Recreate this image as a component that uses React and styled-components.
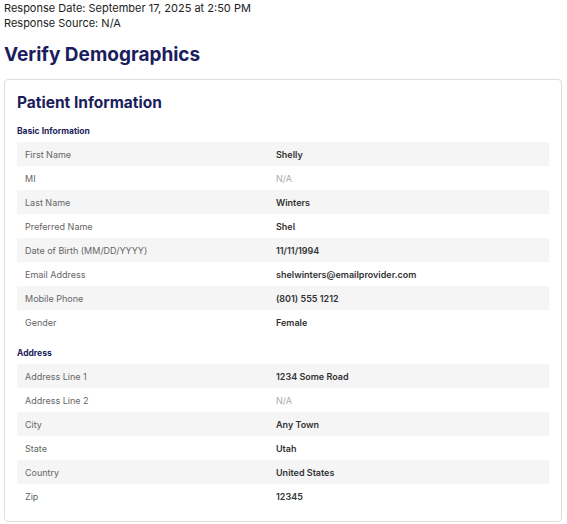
import React from 'react';
import styled, { createGlobalStyle } from 'styled-components';

const GlobalStyle = createGlobalStyle`
  body {
    margin: 0;
    font-family: Inter, "Noto Sans", sans-serif;
    background: #fff;
    color: #222;
  }
`;

const Page = styled.div`
  padding: 1px 5px 0 4px;
`;

const MetaLine = styled.div`
  font-size: 11px;
  line-height: 15px;
  color: #222;
`;

const Title = styled.h1`
  margin: 12px 0 12px;
  font-size: 19px;
  line-height: 24px;
  font-weight: 700;
  color: #1b1d5c;
`;

const Card = styled.div`
  border: 1px solid #ddd;
  border-radius: 4px;
  padding: 12px 12px 13px;
`;

const CardTitle = styled.h2`
  margin: 0 0 11px;
  font-size: 15.5px;
  line-height: 22px;
  font-weight: 700;
  color: #1b1d5c;
`;

const SectionTitle = styled.h3`
  margin: ${(p) => (p.$first ? '0' : '13px')} 0 5px;
  font-size: 8.5px;
  line-height: 12px;
  font-weight: 700;
  color: #1b1d5c;
`;

const Row = styled.div`
  display: grid;
  grid-template-columns: 251px 1fr;
  height: 24px;
  align-items: center;
  padding-left: 8px;
  font-size: 9px;
  background: ${(p) => (p.$shade ? '#f5f5f5' : 'transparent')};
`;

const Label = styled.span`
  color: #666;
`;

const Value = styled.span`
  color: ${(p) => (p.$empty ? '#aaa' : '#333')};
  font-weight: ${(p) => (p.$empty ? 400 : 600)};
`;

const basic = [
  ['First Name', 'Shelly'],
  ['MI', null],
  ['Last Name', 'Winters'],
  ['Preferred Name', 'Shel'],
  ['Date of Birth (MM/DD/YYYY)', '11/11/1994'],
  ['Email Address', 'shelwinters@emailprovider.com'],
  ['Mobile Phone', '(801) 555 1212'],
  ['Gender', 'Female'],
];

const address = [
  ['Address Line 1', '1234 Some Road'],
  ['Address Line 2', null],
  ['City', 'Any Town'],
  ['State', 'Utah'],
  ['Country', 'United States'],
  ['Zip', '12345'],
];

const Rows = ({ items }) =>
  items.map(([label, value], i) => (
    <Row key={label} $shade={i % 2 === 0}>
      <Label>{label}</Label>
      <Value $empty={!value}>{value || 'N/A'}</Value>
    </Row>
  ));

export default function App() {
  return (
    <Page>
      <GlobalStyle />
      <MetaLine>Response Date: September 17, 2025 at 2:50 PM</MetaLine>
      <MetaLine>Response Source: N/A</MetaLine>
      <Title>Verify Demographics</Title>
      <Card>
        <CardTitle>Patient Information</CardTitle>
        <SectionTitle $first>Basic Information</SectionTitle>
        <Rows items={basic} />
        <SectionTitle>Address</SectionTitle>
        <Rows items={address} />
      </Card>
    </Page>
  );
}
